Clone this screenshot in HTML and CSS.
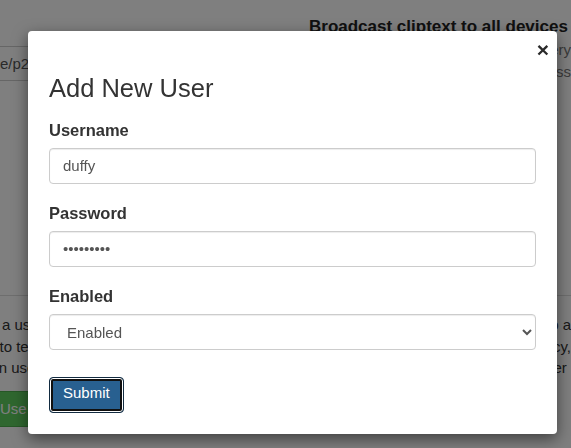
FILE: index.html
```html
<!DOCTYPE html>
<html lang="en">
<head>
<meta charset="utf-8">
<title>Add New User</title>
<link rel="stylesheet" href="styles.css">
</head>
<body>
<div class="page">
  <section class="col col-left top">
    <div class="url-box">e/p2p/share/clip</div>
  </section>
  <section class="col col-right top">
    <h4 class="heading">Broadcast cliptext to all devices</h4>
    <p class="muted"><span class="line">Send the same text to every</span><span class="line">device at once, regardless</span></p>
  </section>
  <section class="col col-left bottom">
    <p class="text"><span class="line">is a user of this server</span><span class="line">d to test the connection</span><span class="line">ion use this device</span></p>
    <button class="btn-success" type="button">Use this device</button>
  </section>
  <section class="col col-right bottom">
    <p class="text right"><span class="line">and send it to a</span><span class="line">for privacy,</span><span class="line">owner </span></p>
  </section>
</div>

<div class="backdrop"></div>

<div class="modal" role="dialog" aria-labelledby="modal-title">
  <button class="close" type="button" aria-label="Close">×</button>
  <h3 class="modal-title" id="modal-title">Add New User</h3>
  <form class="form">
    <div class="group">
      <label class="label" for="username">Username</label>
      <input class="control" id="username" type="text" value="duffy">
    </div>
    <div class="group">
      <label class="label" for="password">Password</label>
      <input class="control" id="password" type="password" value="duffy1234">
    </div>
    <div class="group">
      <label class="label" for="enabled">Enabled</label>
      <select class="control select" id="enabled">
        <option selected>Enabled</option>
        <option>Disabled</option>
      </select>
    </div>
    <button class="btn-primary" type="button">Submit</button>
  </form>
</div>
</body>
</html>
```
FILE: styles.css
```css
html, body {
  margin: 0;
  padding: 0;
  width: 571px;
  height: 448px;
  overflow: hidden;
  background: #fff;
  font-family: "Liberation Sans", Arial, Helvetica, sans-serif;
  color: #333;
}

/* ---------- underlying page ---------- */
.page {
  display: grid;
  grid-template-columns: 303px 281px;
  grid-template-rows: 296px auto;
  margin-left: -13px;
}

.col { min-width: 0; overflow: hidden; }
.col.top { border-bottom: 1px solid #dcdcdc; }

.col-left.top { padding-top: 46px; }

.url-box {
  box-sizing: border-box;
  height: 35px;
  border: 1px solid #ccc;
  border-radius: 4px;
  padding: 7px 12px;
  font-size: 15px;
  line-height: 20px;
  color: #555;
  white-space: nowrap;
}

.col-right.top { padding: 16px 0 0 19px; }

.heading {
  margin: 0;
  font-size: 17px;
  line-height: 22px;
  font-weight: bold;
  color: #222;
  white-space: nowrap;
}

.muted {
  margin: 1px 0 0;
  font-size: 15px;
  line-height: 22px;
  color: #777;
  text-align: right;
}

.line { display: block; white-space: pre; }

.col.bottom { padding-top: 18px; }

.text {
  margin: 0;
  font-size: 15px;
  line-height: 21.5px;
  color: #333;
}
.text.right { text-align: right; }

.btn-success {
  display: block;
  margin-top: 12px;
  height: 36px;
  border: 1px solid #4cae4c;
  border-radius: 4px;
  background: #5fcf5f;
  color: #fff;
  font: inherit;
  font-size: 15px;
  padding: 0 12px;
  white-space: nowrap;
}

/* ---------- overlay + modal ---------- */
.backdrop {
  position: fixed;
  inset: 0;
  background: rgba(0, 0, 0, 0.5);
}

.modal {
  position: absolute;
  top: 31px;
  left: 28px;
  width: 529px;
  box-sizing: border-box;
  padding: 43px 21px 21px;
  background: #fff;
  border-radius: 4px;
  box-shadow: 0 5px 15px rgba(0, 0, 0, 0.5);
}

.close {
  position: absolute;
  top: 8px;
  right: 8px;
  margin: 0;
  padding: 0;
  border: 0;
  background: none;
  font-family: "Liberation Sans", Arial, sans-serif;
  font-size: 21px;
  font-weight: bold;
  line-height: 1;
  color: #2a2a2a;
}

.modal-title {
  margin: 0 0 16px;
  font-size: 25.5px;
  line-height: 28px;
  font-weight: normal;
  color: #333;
}

.form { display: flex; flex-direction: column; }

.group {
  display: flex;
  flex-direction: column;
  gap: 6px;
  margin-bottom: 17px;
}
.group:last-of-type { margin-bottom: 27px; }

.label {
  font-size: 16.5px;
  line-height: 24px;
  font-weight: bold;
  color: #333;
}

.control {
  box-sizing: border-box;
  width: 100%;
  height: 36px;
  margin: 0;
  padding: 6px 13px 8px;
  border: 1px solid #ccc;
  border-radius: 4px;
  background: #fff;
  box-shadow: inset 0 1px 1px rgba(0, 0, 0, 0.075);
  font-family: "Liberation Sans", Arial, sans-serif;
  font-size: 15px;
  line-height: 20px;
  color: #555;
  outline: none;
}

.select { padding: 6px 13px; }

.btn-primary {
  align-self: flex-start;
  box-sizing: border-box;
  height: 36px;
  margin: 0;
  padding: 5px 13px 9px;
  border: 1px solid #122b40;
  border-radius: 4px;
  background: #286090;
  box-shadow: inset 0 0 0 1px #fff, inset 0 0 0 3px #101010;
  font-family: "Liberation Sans", Arial, sans-serif;
  font-size: 15px;
  line-height: 20px;
  color: #fff;
  outline: none;
}
```
